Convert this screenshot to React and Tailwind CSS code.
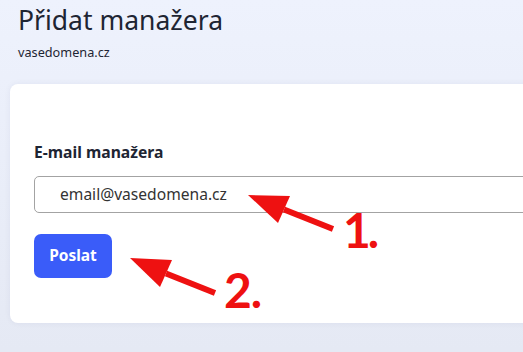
import React from 'react';

const Arrow = ({ tail, tip, left, right }) => (
  <>
    <line x1={tail[0]} y1={tail[1]} x2={(left[0] + right[0]) / 2} y2={(left[1] + right[1]) / 2} stroke="#ee1111" strokeWidth="6" />
    <polygon points={`${tip[0]},${tip[1]} ${left[0]},${left[1]} ${right[0]},${right[1]}`} fill="#ee1111" />
  </>
);

export default function App() {
  return (
    <div
      className="relative w-[523px] h-[352px] overflow-hidden bg-gradient-to-b from-[#eef2fd] to-[#e5e9f4]"
      style={{ fontFamily: '"Noto Sans", "Open Sans", sans-serif' }}
    >
      <div className="pl-[18px] pt-[1px]">
        <h1 className="text-[26.5px] leading-[38px] text-[#1e2533]">Přidat manažera</h1>
        <p className="text-[12.7px] leading-[18px] mt-[4px] text-[#1e2533]">vasedomena.cz</p>
      </div>

      <div className="ml-[10px] mt-[23px] w-[560px] h-[239px] bg-white rounded-[8px] shadow-[0_0_6px_rgba(30,40,80,0.06)] pl-[24px] pt-[58px]">
        <label className="block text-[15.7px] leading-[20px] font-bold text-[#1e2533]">E-mail manažera</label>
        <div className="mt-[14px] h-[37px] border border-[#a3a3a3] rounded-[5px] flex items-center pl-[25px] text-[15.6px] text-[#333]">
          email@vasedomena.cz
        </div>
        <button className="mt-[21px] w-[78px] h-[44px] rounded-[7px] bg-[#3a5cf9] text-white font-bold text-[15.5px]">
          Poslat
        </button>
      </div>

      <svg className="absolute inset-0 pointer-events-none" width="523" height="352">
        <Arrow tail={[333, 229]} tip={[248, 195]} left={[290, 196]} right={[278, 223]} />
        <Arrow tail={[215, 293]} tip={[130, 258]} left={[172, 260]} right={[160, 287]} />
      </svg>
      <div
        className="absolute left-[343px] top-[200px] text-[48px] leading-[60px] font-bold tracking-[-3px] text-[#ee1111]"
        style={{ fontFamily: 'Lato, sans-serif' }}
      >
        1.
      </div>
      <div
        className="absolute left-[224px] top-[260px] text-[48px] leading-[60px] font-bold tracking-[-1px] text-[#ee1111]"
        style={{ fontFamily: 'Lato, sans-serif' }}
      >
        2.
      </div>
    </div>
  );
}
